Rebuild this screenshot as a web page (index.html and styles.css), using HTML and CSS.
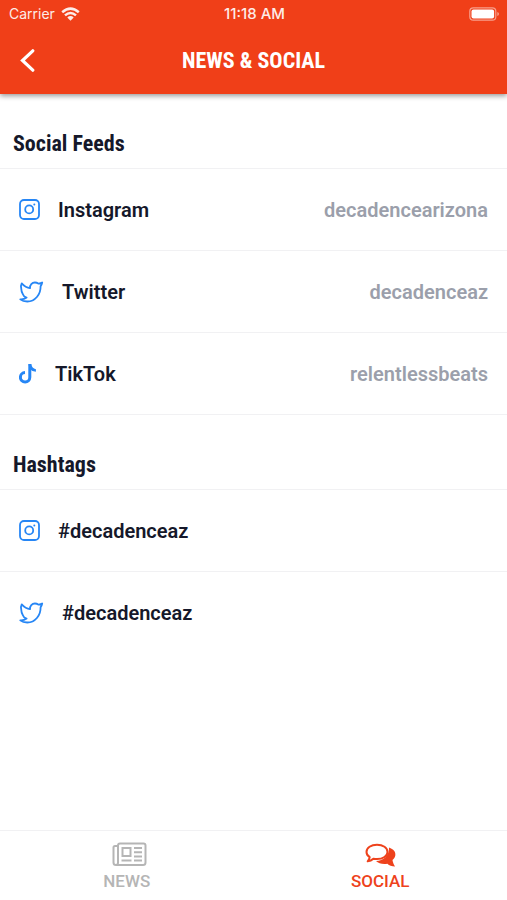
FILE: index.html
```html
<!DOCTYPE html>
<html lang="en">
<head>
<meta charset="utf-8">
<meta name="viewport" content="width=device-width, initial-scale=1">
<title>News &amp; Social</title>
<link rel="stylesheet" href="styles.css">
</head>
<body>
<svg class="sprite" aria-hidden="true">
  <symbol id="instagram" viewBox="0 0 21 21">
    <rect x="1" y="1" width="19" height="19" rx="4" fill="none" stroke="currentColor" stroke-width="1.800"/>
    <circle cx="10.2" cy="10.4" r="4" fill="none" stroke="currentColor" stroke-width="1.800"/>
    <circle cx="15.3" cy="5.6" r="1" fill="currentColor"/>
  </symbol>
  <symbol id="twitter" viewBox="0 0 25 22">
    <path d="M2.700 2.400C5 5 8 6.900 11 7.100C10.800 3.900 13 1.500 15.900 1.500C17.600 1.500 18.700 2.100 19.700 2.700C21 2.500 22.300 2.200 23.200 1.500C22.900 3 22.300 4.200 21.600 5.200C21.800 13.500 16 20.500 8.300 20.500C5.500 20.500 3 19.800 1.300 18.400C3.700 18.600 5.900 17.900 7.600 16.500C5.600 16 4.300 14.600 3.900 13.200C2.800 11.500 2.300 9.500 2.300 8C1.800 6 1.800 4 2.700 2.400Z" fill="none" stroke="currentColor" stroke-width="1.800" stroke-linejoin="round"/>
  </symbol>
</svg>
<header class="header">
  <div class="status">
    <span class="carrier">Carrier
      <svg class="wifi" viewBox="0 0 19 14" aria-hidden="true">
        <path d="M1.200 5.200Q9.500-2 17.800 5.200M4 8.400Q9.500 3.600 15 8.400" fill="none" stroke="currentColor" stroke-width="2.500"/>
        <path d="M6.300 10.400Q9.500 7.600 12.700 10.400L9.500 13.700Z" fill="currentColor"/>
      </svg>
    </span>
    <span class="time">11:18 AM</span>
    <svg class="battery" viewBox="0 0 31 14" aria-hidden="true">
      <rect x=".8" y=".8" width="26" height="12.400" rx="3.500" fill="none" stroke="currentColor" stroke-opacity=".5" stroke-width="1.200"/>
      <rect x="2.500" y="2.500" width="22.600" height="9" rx="2" fill="currentColor"/>
      <path d="M28.300 5Q30 5.500 30 7T28.300 9Z" fill="currentColor" fill-opacity=".5"/>
    </svg>
  </div>
  <div class="titlebar">
    <button class="back" type="button" aria-label="Back">
      <svg viewBox="0 0 15 25" aria-hidden="true"><path d="M12.800 1.800L2.500 11.500L12.800 21.200" fill="none" stroke="currentColor" stroke-width="3.200" stroke-linecap="round"/></svg>
    </button>
    <h1 class="title">NEWS &amp; SOCIAL</h1>
  </div>
</header>
<main class="content">
  <section class="group">
    <h2 class="heading">Social Feeds</h2>
    <ul class="list">
      <li><a class="row" href="#instagram-feed"><svg class="icon instagram" aria-hidden="true"><use href="#instagram"/></svg><span class="name">Instagram</span><span class="handle">decadencearizona</span></a></li>
      <li><a class="row" href="#twitter-feed"><svg class="icon twitter" aria-hidden="true"><use href="#twitter"/></svg><span class="name">Twitter</span><span class="handle">decadenceaz</span></a></li>
      <li><a class="row" href="#tiktok-feed"><svg class="icon tiktok" viewBox="0 0 18 20" aria-hidden="true"><path d="M10.800.3V13.300A4.700 4.700 0 1 1 6 8.600" fill="none" stroke="currentColor" stroke-width="3"/><path d="M9.300 0H12.300Q12.800 4.300 16.900 5.200V7.800Q13 7.500 11 5.200Z" fill="currentColor"/></svg><span class="name">TikTok</span><span class="handle">relentlessbeats</span></a></li>
    </ul>
  </section>
  <section class="group">
    <h2 class="heading">Hashtags</h2>
    <ul class="list">
      <li><a class="row" href="#instagram-tag"><svg class="icon instagram" aria-hidden="true"><use href="#instagram"/></svg><span class="name">#decadenceaz</span></a></li>
      <li><a class="row" href="#twitter-tag"><svg class="icon twitter" aria-hidden="true"><use href="#twitter"/></svg><span class="name">#decadenceaz</span></a></li>
    </ul>
  </section>
</main>
<nav class="tabs">
  <a class="tab" href="#news">
    <svg class="tab-icon" viewBox="0 0 40 25" aria-hidden="true">
      <g fill="none" stroke="currentColor" stroke-width="2" transform="translate(5)"><path d="M6 4H3Q1.500 4 1.500 5.500V20.500Q1.500 23 4 23H31Q33.500 23 33.500 20.500V3.500Q33.500 1.500 31.500 1.500H8Q6 1.500 6 3.500V20.500Q6 23 4 23"/><rect x="10.500" y="6" width="8" height="8"/><path d="M22 6H30M22 10.300H30M22 14.500H30M9.500 18.500H19.500M22 18.500H30"/></g>
    </svg>
    <span>NEWS</span>
  </a>
  <a class="tab active" href="#social" aria-current="page">
    <svg class="tab-icon" viewBox="0 0 40 25" aria-hidden="true">
      <g transform="translate(3)">
      <path d="M26 5.500C30.500 7 33 10 32.300 13.500C32 15.300 31 16.800 29.500 18C29.700 20 30.700 22.500 32.100 24.500C28.700 24.500 26.200 23.500 24.400 21.800C19.500 22.500 15.500 21.500 13 19C20.500 18.800 26.500 13.500 26 5.500Z" fill="currentColor"/>
      <path d="M14 2.700C20 2.700 24.500 5.800 24.500 9.900S20 17.100 14 17.100C12.700 17.100 11.500 17 10.400 16.700C8.900 18.100 6.900 19.100 4.700 19.300C5.800 18 6.500 16.700 6.700 15.200C4.700 13.900 3.500 11.900 3.500 9.900C3.500 5.800 8 2.700 14 2.700Z" fill="none" stroke="currentColor" stroke-width="2" stroke-linejoin="round"/>
      </g>
    </svg>
    <span>SOCIAL</span>
  </a>
</nav>
</body>
</html>
```
FILE: styles.css
```css
* { box-sizing: border-box; }

body {
  margin: 0;
  min-height: 100vh;
  display: flex;
  flex-direction: column;
  background: #fff;
  color: #15182a;
  font-family: Roboto, "Liberation Sans", sans-serif;
}

a { color: inherit; text-decoration: none; }

.sprite { position: absolute; width: 0; height: 0; }

.header {
  background: #f03f18;
  color: #fff;
  box-shadow: 0 2px 5px rgba(0, 0, 0, .4);
}

.status {
  display: grid;
  grid-template-columns: 1fr auto 1fr;
  align-items: center;
  height: 28px;
  padding: 0 7px 0 9px;
  font: 14px/20px Inter, sans-serif;
}

.carrier { display: flex; align-items: center; gap: 6px; opacity: .9; }
.wifi { width: 19px; height: 14px; }
.time { font-size: 15px; font-weight: 500; opacity: .9; }
.battery { width: 31px; height: 14px; justify-self: end; }

.titlebar {
  display: grid;
  grid-template-columns: 56px 1fr 56px;
  align-items: center;
  height: 66px;
}

.back {
  display: flex;
  align-items: center;
  height: 48px;
  padding: 0 0 0 20px;
  border: 0;
  background: none;
  color: inherit;
}

.back svg { width: 15px; height: 25px; }

.title, .heading {
  margin: 0;
  font-family: "Roboto Condensed", "Liberation Sans Narrow", Roboto, sans-serif;
  font-size: 22px;
  line-height: 28px;
  font-weight: 700;
}

.title { text-align: center; }

.content { flex: 1; }

.heading { padding: 36px 13px 10px; }

.list { margin: 0; padding: 0; list-style: none; border-top: 1px solid #f1f1f3; }
.group:first-child .list { border-bottom: 1px solid #f1f1f3; }
.list li + li { border-top: 1px solid #f1f1f3; }

.row {
  display: flex;
  align-items: center;
  gap: 18px;
  height: 81px;
  padding: 0 19px;
  font-size: 20px;
  line-height: 24px;
  font-weight: 600;
}

.handle { margin-left: auto; color: #9b9fab; }

.icon { color: #2686f5; flex: none; }
.instagram { width: 21px; height: 21px; }
.twitter { width: 25px; height: 22px; }
.tiktok { width: 18px; height: 20px; }

.tabs {
  display: flex;
  height: 70px;
  border-top: 1px solid #f1f1f3;
}

.tab {
  flex: 1;
  display: flex;
  flex-direction: column;
  align-items: center;
  gap: 4px;
  padding-top: 11px;
  color: #b5b5b5;
  font-size: 17px;
  line-height: 20px;
  font-weight: 500;
}

.tab-icon { width: 40px; height: 25px; }
.active { color: #ee421c; }
```
